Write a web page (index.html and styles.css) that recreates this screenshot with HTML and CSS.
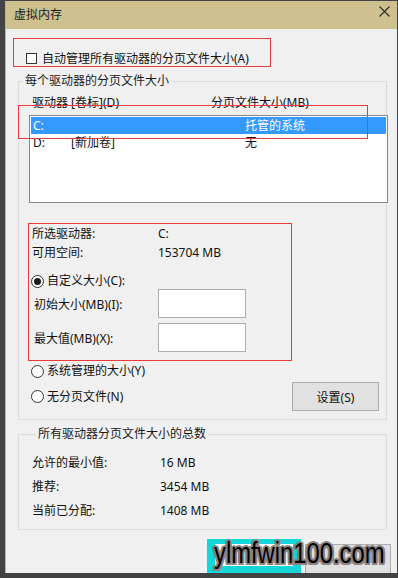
FILE: index.html
```html
<!DOCTYPE html>
<html>
<head>
  <meta charset="utf-8">
  <link rel="stylesheet" href="styles.css">
</head>
<body>
  <div class="window">
    <!-- Title bar -->
    <div class="title-bar">
      <span class="title">虚拟内存</span>
      <svg class="close" width="11" height="11" viewBox="0 0 11 11">
        <path d="M0.5 0.5 L10.5 10.5 M10.5 0.5 L0.5 10.5" stroke="#2b2b2b" stroke-width="1.1" fill="none"/>
      </svg>
    </div>

    <!-- Auto manage -->
    <div class="mark auto-box">
      <span class="checkbox"></span>
      <span>自动管理所有驱动器的分页文件大小(A)</span>
    </div>

    <!-- Per drive group -->
    <fieldset class="group drives">
      <legend>每个驱动器的分页文件大小</legend>
      <div class="drive-list">
        <div class="list-head">
          <span class="col-drive">驱动器 [卷标](D)</span>
          <span>分页文件大小(MB)</span>
        </div>
        <div class="listbox">
          <div class="list-row selected"><span class="c1">C:</span><span class="c2"></span><span>托管的系统</span></div>
          <div class="list-row"><span class="c1">D:</span><span class="c2">[新加卷]</span><span>无</span></div>
        </div>
        <div class="mark list-mark"></div>
      </div>

      <div class="mark selected-box">
        <div class="info-row"><span class="info-label">所选驱动器:</span><span>C:</span></div>
        <div class="info-row"><span class="info-label">可用空间:</span><span>153704 MB</span></div>
        <div class="radio-row custom"><span class="radio checked"></span><span>自定义大小(C):</span></div>
        <div class="size-row first"><span class="size-label">初始大小(MB)(I):</span><span class="field"></span></div>
        <div class="size-row"><span class="size-label">最大值(MB)(X):</span><span class="field"></span></div>
      </div>

      <div class="radio-row sys-row"><span class="radio"></span><span>系统管理的大小(Y)</span></div>
      <div class="none-row">
        <div class="radio-row"><span class="radio"></span><span>无分页文件(N)</span></div>
        <button class="btn">设置(S)</button>
      </div>
    </fieldset>

    <!-- Totals group -->
    <fieldset class="group totals">
      <legend>所有驱动器分页文件大小的总数</legend>
      <div class="total-row"><span class="total-label">允许的最小值:</span><span>16 MB</span></div>
      <div class="total-row"><span class="total-label">推荐:</span><span>3454 MB</span></div>
      <div class="total-row"><span class="total-label">当前已分配:</span><span>1408 MB</span></div>
    </fieldset>

    <!-- Dialog buttons -->
    <div class="bottom-bar">
      <div class="ok-mark"><div class="ok-btn"></div></div>
      <div class="cancel-btn"></div>
    </div>

    <div class="watermark">ylmfwin100.com</div>
  </div>
</body>
</html>
```

FILE: styles.css
```css
/* Main Element Styles */
* {
  box-sizing: border-box;
}
body {
  margin: 0;
  background: #434343;
  font-family: "Noto Sans", "Noto Sans CJK SC", sans-serif;
  font-size: 12px;
  color: #111;
}
.window {
  position: relative;
  width: 392px;
  height: 572px;
  margin: 1px 0 0 5px;
  border-left: 1px solid #c4b27f;
  background: #f0f0f0;
}

/* Title Bar */
.title-bar {
  display: flex;
  align-items: center;
  justify-content: space-between;
  height: 28px;
  padding: 0 7px 0 8px;
  background: #cfc08f;
}
.title {
  line-height: 16px;
  color: #1a1a1a;
}
.close {
  margin-top: -7px;
}

/* Red annotation boxes */
.mark {
  border: 1px solid #ec3a3a;
}
.auto-box {
  display: flex;
  align-items: center;
  gap: 5px;
  width: 258px;
  height: 29px;
  margin: 9px 0 0 7px;
  padding: 12px 0 0 12px;
  line-height: 14px;
}
.checkbox {
  width: 11px;
  height: 11px;
  border: 1px solid #333;
  background: #fff;
}

/* Group Styles */
.group {
  width: 369px;
  min-width: 0;
  margin: 6px 0 0 12px;
  padding: 0;
  border: 1px solid #dcdcdc;
}
.group legend {
  margin-left: 4px;
  padding: 0 2px;
  line-height: 16px;
  color: #1a1a1a;
}
.drives {
  padding-bottom: 8px;
}

/* Drive list */
.drive-list {
  position: relative;
  padding-top: 7px;
}
.list-head {
  display: flex;
  line-height: 14px;
  padding-left: 13px;
}
.col-drive {
  width: 179px;
}
.listbox {
  width: 359px;
  height: 88px;
  margin: 5px 0 0 10px;
  padding: 1px;
  border: 1px solid #828790;
  background: #fff;
}
.list-row {
  display: flex;
  height: 17px;
  line-height: 17px;
  padding-left: 2px;
}
.list-row.selected {
  background: #3399ff;
  color: #fff;
}
.c1 {
  width: 38px;
}
.c2 {
  width: 174px;
}
.list-mark {
  position: absolute;
  left: -1px;
  top: 16px;
  width: 350px;
  height: 34px;
}

/* Selected drive details */
.selected-box {
  width: 264px;
  height: 138px;
  margin: 20px 0 0 9px;
  padding: 3px 0 0 3px;
}
.info-row {
  display: flex;
  line-height: 14px;
}
.info-row + .info-row {
  margin-top: 5px;
}
.info-label {
  width: 126px;
}
.radio-row {
  display: flex;
  align-items: center;
  gap: 3px;
  line-height: 14px;
}
.custom {
  margin: 14px 0 0 -1px;
}
.radio {
  display: flex;
  align-items: center;
  justify-content: center;
  width: 13px;
  height: 13px;
  border: 1px solid #333;
  border-radius: 50%;
  background: #fff;
}
.radio.checked::after {
  content: "";
  width: 7px;
  height: 7px;
  border-radius: 50%;
  background: #1a1a1a;
}
.size-row {
  display: flex;
  align-items: center;
  margin: 5px 0 0 2px;
}
.size-row.first {
  margin-top: 1px;
}
.size-label {
  width: 124px;
}
.field {
  width: 88px;
  height: 29px;
  border: 1px solid #adadad;
  background: #fff;
}
.sys-row {
  margin: 3px 0 0 12px;
}
.none-row {
  display: flex;
  align-items: center;
  justify-content: space-between;
  margin: 4px 7px 0 12px;
}

/* Button Styles */
.btn {
  width: 87px;
  height: 29px;
  padding: 0;
  border: 1px solid #adadad;
  background: #e1e1e1;
  font: inherit;
  color: #111;
}

/* Totals */
.totals {
  padding: 9px 0 6px 13px;
}
.total-row {
  display: flex;
  height: 24px;
  line-height: 24px;
}
.total-label {
  width: 128px;
}

/* Bottom buttons */
.bottom-bar {
  display: flex;
  align-items: flex-start;
  margin: 9px 0 0 201px;
}
.ok-mark {
  width: 94px;
  height: 35px;
  padding: 5px 8px;
  background: #15d7d9;
}
.ok-btn {
  height: 22px;
  background: #fff;
}
.cancel-btn {
  width: 86px;
  height: 30px;
  margin: 5px 0 0 4px;
  border: 1px solid #adadad;
  background: #e1e1e1;
}

/* Watermark */
.watermark {
  position: absolute;
  left: 208px;
  top: 537px;
  font-family: "Liberation Sans", Arial, sans-serif;
  font-size: 29px;
  line-height: 30px;
  color: #000;
  transform: scaleX(0.82);
  transform-origin: left top;
  text-shadow: 2.5px 0 #8a8282, -2.5px 0 #8a8282, 0 2px #8a8282, 0 -2px #8a8282,
    2px 1.5px #8a8282, -2px 1.5px #8a8282, 2px -1.5px #8a8282, -2px -1.5px #8a8282;
}
```
